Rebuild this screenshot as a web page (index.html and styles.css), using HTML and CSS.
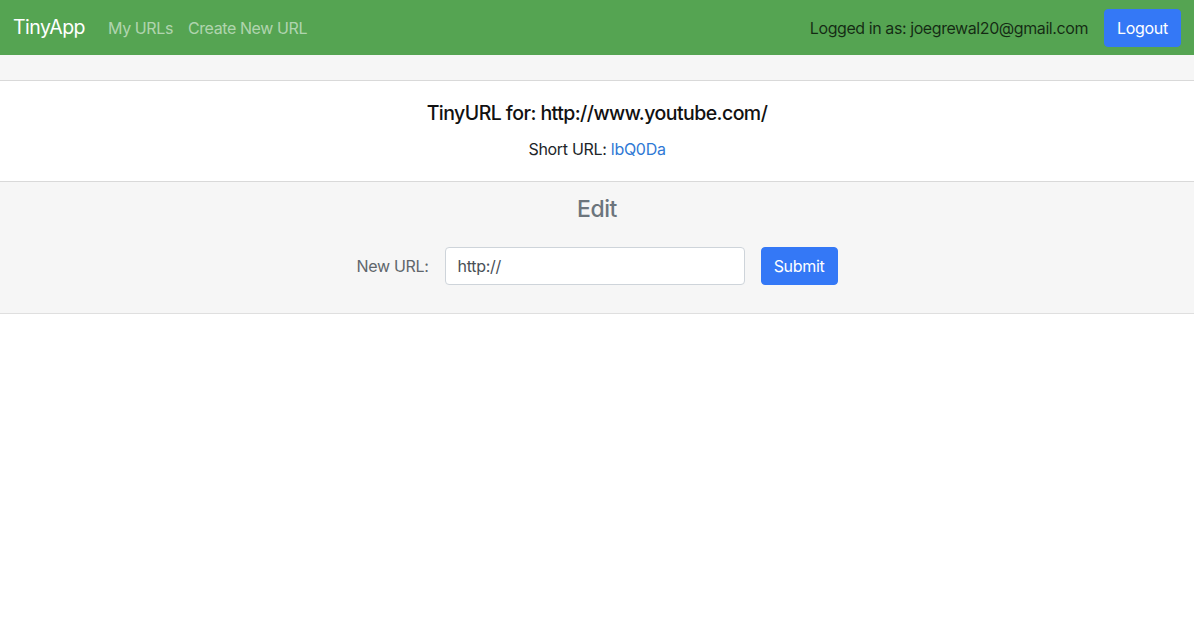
FILE: index.html
```html
<!DOCTYPE html>
<html>
<head>
<meta charset="utf-8">
<title>TinyApp</title>
<link rel="stylesheet" href="styles.css">
</head>
<body>
<nav class="navbar">
  <a class="brand" href="#">TinyApp</a>
  <div class="nav-links">
    <a class="nav-link" href="#">My URLs</a>
    <a class="nav-link" href="#">Create New URL</a>
  </div>
  <div class="nav-right">
    <span class="logged">Logged in as: joegrewal20@gmail.com</span>
    <button class="btn btn-primary logout">Logout</button>
  </div>
</nav>
<main class="card">
  <div class="card-header"></div>
  <div class="card-body">
    <h5 class="card-title">TinyURL for: http://www.youtube.com/</h5>
    <p class="card-text">Short URL: <a class="short" href="#">lbQ0Da</a></p>
  </div>
  <div class="card-footer">
    <h3 class="edit-title">Edit</h3>
    <form class="edit-form">
      <label class="form-label" for="longURL">New URL:</label>
      <input class="form-input" id="longURL" type="text" value="http://">
      <button class="btn btn-primary submit" type="button">Submit</button>
    </form>
  </div>
</main>
</body>
</html>
```
FILE: styles.css
```css
* { box-sizing: border-box; }
html, body { margin: 0; padding: 0; }
body {
  font-family: Inter, "Noto Sans", "Liberation Sans", sans-serif;
  font-size: 16px;
  line-height: 1.5;
  color: #212529;
  background: #fff;
  letter-spacing: -0.3px;
}
a { text-decoration: none; }

.navbar {
  height: 55px;
  background: #55a452;
  display: flex;
  align-items: center;
  padding: 0 13px 0 13px;
}
.brand {
  color: #fff;
  font-size: 19.5px;
  margin-right: 23px;
  letter-spacing: -0.5px;
}
.nav-links { display: flex; gap: 15px; }
.nav-link { color: rgba(255,255,255,0.55); font-size: 16px; letter-spacing: -0.4px; }
.nav-right {
  margin-left: auto;
  display: flex;
  align-items: center;
  gap: 16px;
}
.logged { color: rgba(0,0,0,0.75); font-size: 16px; letter-spacing: -0.42px; }
.btn {
  font-family: inherit;
  font-size: 16px;
  letter-spacing: -0.3px;
  border: 1px solid transparent;
  border-radius: 4px;
  cursor: pointer;
}
.btn-primary { background: #3478f6; color: #fff; border-color: #3478f6; }
.logout { height: 38px; width: 77px; padding: 0; }

.card {
  border-bottom: 1px solid rgba(0,0,0,0.125);
  text-align: center;
}
.card-header {
  height: 26px;
  background: #f6f6f6;
  border-bottom: 1px solid #d9d9d9;
}
.card-body {
  height: 100px;
  padding-top: 20px;
}
.card-title {
  margin: 0 0 12px;
  font-size: 19.5px;
  font-weight: 500;
  line-height: 24px;
  letter-spacing: -0.55px;
  color: #111;
}
.card-text { margin: 0; font-size: 16px; line-height: 24px; color: #212529; }
.short { color: #2f79d5; }
.card-footer {
  height: 132px;
  background: #f6f6f6;
  border-top: 1px solid #d9d9d9;
  padding-top: 13px;
}
.edit-title {
  margin: 0 0 24px;
  font-size: 23px;
  font-weight: 500;
  line-height: 28px;
  letter-spacing: -0.4px;
  color: #6c757d;
}
.edit-form {
  display: flex;
  justify-content: center;
  align-items: center;
}
.form-label { color: #5f666c; margin-right: 16px; }
.form-input {
  width: 300px;
  height: 38px;
  border: 1px solid #ced4da;
  border-radius: 4px;
  background: #fff;
  padding: 0 12px;
  font-family: inherit;
  font-size: 16px;
  letter-spacing: -0.3px;
  color: #495057;
  margin-right: 16px;
}
.submit { height: 38px; width: 77px; padding: 0; }
```
